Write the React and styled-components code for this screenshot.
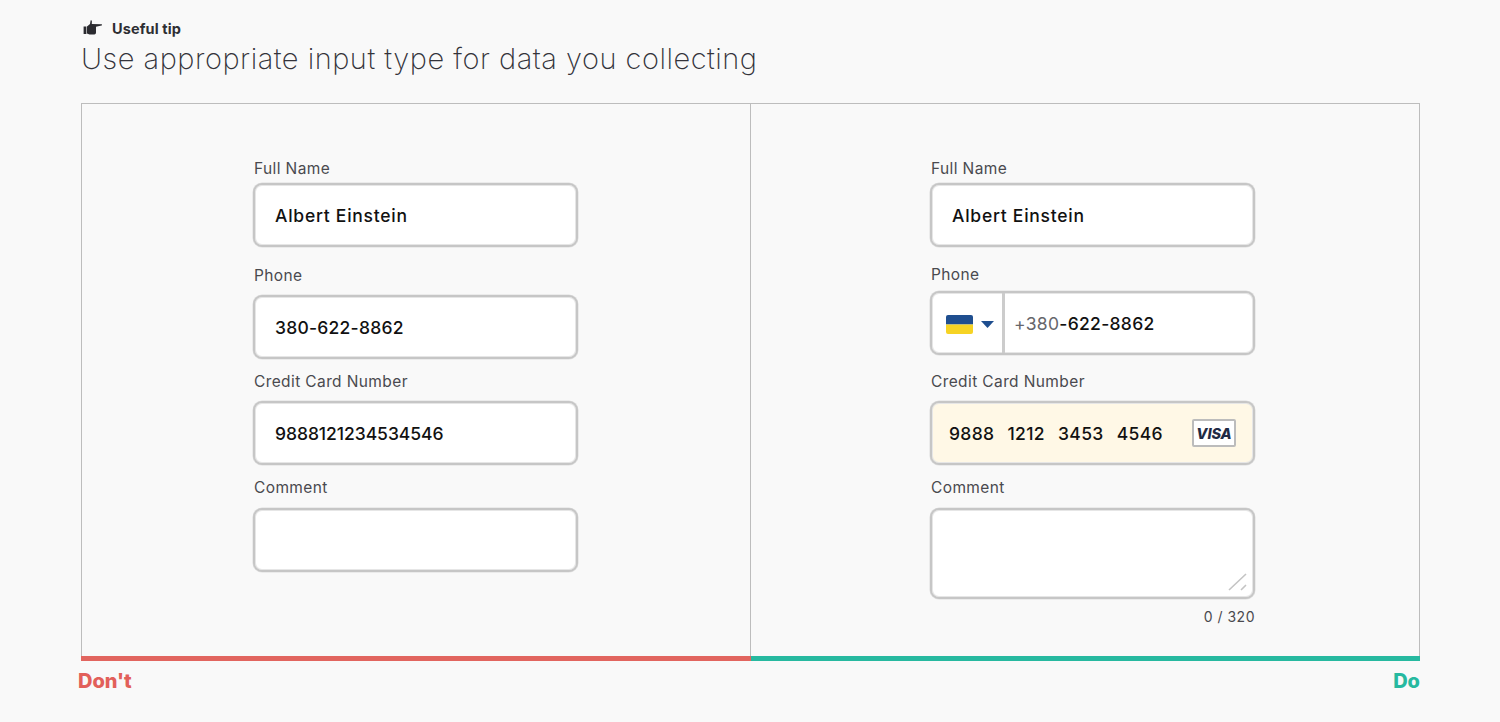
import React from "react";
import styled, { createGlobalStyle } from "styled-components";

const Global = createGlobalStyle`
  html, body { margin: 0; padding: 0; background: #f9f9f9; }
  body { font-family: "Inter", "Liberation Sans", sans-serif; }
  * { box-sizing: border-box; }
`;
const Page = styled.div`
  width: 1500px; height: 722px; padding: 18px 81px 0; overflow: hidden;
`;
const TipRow = styled.div`
  display: flex; align-items: center; gap: 9px; height: 20px; padding-left: 2px;
`;
const TipText = styled.span`
  font-size: 14.5px; font-weight: 700; color: #2e2e33; letter-spacing: 0.12px;
`;
const Title = styled.h1`
  margin: 3px 0 0; font-size: 29px; line-height: 36px; font-weight: 250; color: #33333a;
  letter-spacing: 0.5px; white-space: nowrap;
`;
const Board = styled.div`
  margin-top: 26px; display: grid; grid-template-columns: 670px 669px; height: 553px;
`;
const Panel = styled.section`
  border: 1px solid #bdbdbd; border-bottom: none;
  ${(p) => (p.$right ? "border-left: none;" : "")}
  padding: 54px 0 0 ${(p) => (p.$right ? "179px" : "171px")};
`;
const Field = styled.div`
  width: 325px; margin-bottom: ${(p) => p.$mb || 0}px;
`;
const Label = styled.div`
  height: ${(p) => p.$h || 25}px; padding: 1px 0 0 1px;
  font-size: 15.5px; line-height: 20px; color: #4a4a4f; letter-spacing: 0.39px;
`;
const Box = styled.div`
  display: flex; align-items: center; height: ${(p) => p.$h || 64}px;
  background: ${(p) => p.$bg || "#fff"};
  border: 2px solid #c6c6c6; box-shadow: inset 0 0 0 1px #e6e6e6, 0 0 0 0.5px #dedede;
  border-radius: 9px; padding-left: 20px;
  font-size: 17.5px; font-weight: 500; color: #111;
  letter-spacing: ${(p) => p.$track ?? 0.75}px; position: relative; overflow: hidden;
`;
const PhoneBox = styled(Box)`
  padding-left: 0;
`;
const Country = styled.div`
  display: flex; align-items: center; gap: 8px; height: 100%; width: 73px;
  padding-left: 14px; border-right: 3px solid #cccccc; flex: none;
`;
const Prefix = styled.span`
  color: #66666b; font-weight: 400; margin-left: 9px;
`;
const CardBox = styled(Box)`
  padding-left: 17px; justify-content: space-between; padding-right: 17px;
  word-spacing: 8px;
`;
const Visa = styled.div`
  width: 44px; height: 28px; border: 2px solid #bcbcbc; background: #fff; border-radius: 2px;
  display: flex; align-items: center; justify-content: center;
  font-size: 14.5px; font-weight: 800; font-style: italic; color: #1f2a44; letter-spacing: -0.1px;
`;
const Counter = styled.div`
  text-align: right; margin-top: 9px; font-size: 14px; line-height: 18px; color: #4a4a4f; letter-spacing: 0.5px;
`;
const Grip = styled.svg`
  position: absolute; right: 5px; bottom: 5px;
`;
const FlagIcon = styled.svg`
  margin-top: 3px; flex: none;
`;
const CaretIcon = styled.svg`
  margin-top: 2px; flex: none;
`;
const Bars = styled.div`
  display: grid; grid-template-columns: 670px 669px; height: 5px;
`;
const Bar = styled.div`
  background: ${(p) => p.$c};
`;
const Verdicts = styled.div`
  display: flex; justify-content: space-between; margin: 8px -1px 0 -3px;
`;
const Verdict = styled.span`
  font-size: 20px; line-height: 24px; font-weight: 800; color: ${(p) => p.$c};
`;

const Hand = () => (
  <svg width="20" height="16" viewBox="0 0 20 16">
    <path fill="#2b2b30" d="M.6 6.5h2.8v7.5H.6zM4 6.5L7 4l.6-3.6c.7-.3 1.3.1 1.3.9L8.8 4l9.7.3c.8.1.8 1.2 0 1.3l-5.5 1.1V12.6c0 1.2-.8 2-1.6 2H6.5L4 13.6z" />
  </svg>
);
const Flag = () => (
  <FlagIcon width="27" height="19" viewBox="0 0 27 19">
    <path fill="#1f4e8f" d="M2 0h23a2 2 0 0 1 2 2v7.5H0V2a2 2 0 0 1 2-2z" />
    <path fill="#f6d324" d="M0 9.5h27V17a2 2 0 0 1-2 2H2a2 2 0 0 1-2-2z" />
  </FlagIcon>
);
const Caret = () => (
  <CaretIcon width="13" height="7" viewBox="0 0 13 7"><path fill="#1f4e8f" d="M0 0h13L6.5 7z" /></CaretIcon>
);

export default function App() {
  return (
    <Page>
      <Global />
      <TipRow><Hand /><TipText>Useful tip</TipText></TipRow>
      <Title>Use appropriate input type for data you collecting</Title>
      <Board>
        <Panel>
          <Field $mb={18}><Label>Full Name</Label><Box>Albert Einstein</Box></Field>
          <Field $mb={12}><Label $h={30}>Phone</Label><Box $track={0.23}>380-622-8862</Box></Field>
          <Field $mb={12}><Label $h={30}>Credit Card Number</Label><Box $track={-0.05}>9888121234534546</Box></Field>
          <Field><Label $h={31}>Comment</Label><Box /></Field>
        </Panel>
        <Panel $right>
          <Field $mb={17}><Label>Full Name</Label><Box>Albert Einstein</Box></Field>
          <Field $mb={16}><Label $h={27}>Phone</Label>
            <PhoneBox $track={0.3}>
              <Country><Flag /><Caret /></Country>
              <Prefix>+380</Prefix>-622-8862
            </PhoneBox>
          </Field>
          <Field $mb={12}><Label $h={30}>Credit Card Number</Label>
            <CardBox $bg="#fff8e6" $track={0.35}><span>9888 1212 3453 4546</span><Visa>VISA</Visa></CardBox>
          </Field>
          <Field><Label $h={31}>Comment</Label>
            <Box $h={91}>
              <Grip width="20" height="20" viewBox="0 0 20 20">
                <path stroke="#c4c4c4" strokeWidth="1.6" d="M1 18L18 2M13 18l5-5" fill="none" />
              </Grip>
            </Box>
            <Counter>0 / 320</Counter>
          </Field>
        </Panel>
      </Board>
      <Bars><Bar $c="#e2655f" /><Bar $c="#27b9a0" /></Bars>
      <Verdicts><Verdict $c="#e2605a">Don't</Verdict><Verdict $c="#27b9a0">Do</Verdict></Verdicts>
    </Page>
  );
}
